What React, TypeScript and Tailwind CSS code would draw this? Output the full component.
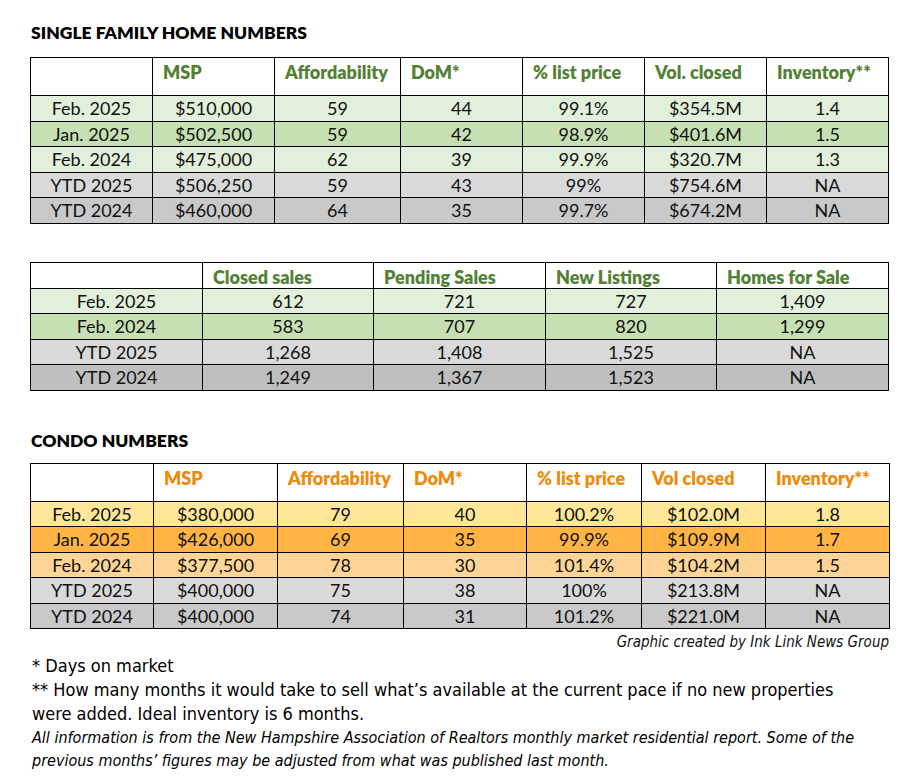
import React from "react";

type Row = { label: string; cells: string[]; bg: string };

const sfHeaders = ["MSP", "Affordability", "DoM*", "% list price", "Vol. closed", "Inventory**"];
const sfRows: Row[] = [
  { label: "Feb. 2025", cells: ["$510,000", "59", "44", "99.1%", "$354.5M", "1.4"], bg: "bg-[#e2efda]" },
  { label: "Jan. 2025", cells: ["$502,500", "59", "42", "98.9%", "$401.6M", "1.5"], bg: "bg-[#c6e0b4]" },
  { label: "Feb. 2024", cells: ["$475,000", "62", "39", "99.9%", "$320.7M", "1.3"], bg: "bg-[#e2efda]" },
  { label: "YTD 2025", cells: ["$506,250", "59", "43", "99%", "$754.6M", "NA"], bg: "bg-[#d9d9d9]" },
  { label: "YTD 2024", cells: ["$460,000", "64", "35", "99.7%", "$674.2M", "NA"], bg: "bg-[#c9c9c9]" },
];

const salesHeaders = ["Closed sales", "Pending Sales", "New Listings", "Homes for Sale"];
const salesRows: Row[] = [
  { label: "Feb. 2025", cells: ["612", "721", "727", "1,409"], bg: "bg-[#e2efda]" },
  { label: "Feb. 2024", cells: ["583", "707", "820", "1,299"], bg: "bg-[#c6e0b4]" },
  { label: "YTD 2025", cells: ["1,268", "1,408", "1,525", "NA"], bg: "bg-[#d9d9d9]" },
  { label: "YTD 2024", cells: ["1,249", "1,367", "1,523", "NA"], bg: "bg-[#bfbfbf]" },
];

const condoHeaders = ["MSP", "Affordability", "DoM*", "% list price", "Vol closed", "Inventory**"];
const condoRows: Row[] = [
  { label: "Feb. 2025", cells: ["$380,000", "79", "40", "100.2%", "$102.0M", "1.8"], bg: "bg-[#ffe699]" },
  { label: "Jan. 2025", cells: ["$426,000", "69", "35", "99.9%", "$109.9M", "1.7"], bg: "bg-[#ffb444]" },
  { label: "Feb. 2024", cells: ["$377,500", "78", "30", "101.4%", "$104.2M", "1.5"], bg: "bg-[#ffd597]" },
  { label: "YTD 2025", cells: ["$400,000", "75", "38", "100%", "$213.8M", "NA"], bg: "bg-[#d9d9d9]" },
  { label: "YTD 2024", cells: ["$400,000", "74", "31", "101.2%", "$221.0M", "NA"], bg: "bg-[#c9c9c9]" },
];

const DataTable = ({
  headers,
  rows,
  widths,
  headColor,
  headHeight,
}: {
  headers: string[];
  rows: Row[];
  widths: number[];
  headColor: string;
  headHeight: string;
}) => (
  <table className="w-[859px] table-fixed border-collapse">
    <colgroup>
      {widths.map((w, i) => (
        <col key={i} style={{ width: w }} />
      ))}
    </colgroup>
    <thead>
      <tr className={headHeight}>
        <th className="border border-black bg-white" />
        {headers.map((h) => (
          <th
            key={h}
            className={`border border-black bg-white pl-[10px] pt-[3px] text-left align-top text-[18px] font-extrabold leading-[22px] ${headColor}`}
          >
            {h}
          </th>
        ))}
      </tr>
    </thead>
    <tbody>
      {rows.map((r) => (
        <tr key={r.label} className={`h-[25.5px] ${r.bg}`}>
          <td className="border border-black text-center text-[18px] leading-[22px]">{r.label}</td>
          {r.cells.map((c, i) => (
            <td key={i} className="border border-black text-center text-[18px] leading-[22px]">
              {c}
            </td>
          ))}
        </tr>
      ))}
    </tbody>
  </table>
);

export default function App() {
  return (
    <div className="min-h-[783px] w-[914px] bg-white pl-[30px] pt-[22px] text-[#111] font-['Lato',sans-serif]">
      <h2 className="pl-[1px] text-[17.5px] font-extrabold leading-[22px] text-black">SINGLE FAMILY HOME NUMBERS</h2>
      <div className="mt-[13px]">
        <DataTable
          headers={sfHeaders}
          rows={sfRows}
          widths={[122, 122, 126, 122, 122, 122, 122]}
          headColor="text-[#538135]"
          headHeight="h-[38px]"
        />
      </div>

      <div className="mt-[38px]">
        <DataTable
          headers={salesHeaders}
          rows={salesRows}
          widths={[172, 171, 172, 171, 172]}
          headColor="text-[#538135]"
          headHeight="h-[26px]"
        />
      </div>

      <h2 className="mt-[39px] pl-[1px] text-[17.5px] font-extrabold leading-[22px] text-black">CONDO NUMBERS</h2>
      <div className="mt-[11px]">
        <DataTable
          headers={condoHeaders}
          rows={condoRows}
          widths={[123, 124, 126, 123, 115, 124, 124]}
          headColor="text-[#ec8b0c]"
          headHeight="h-[38px]"
        />
      </div>

      <p className="w-[859px] pt-[3px] text-right text-[15px] italic leading-[20px] font-['Liberation_Sans_Narrow','DejaVu_Sans_Condensed',sans-serif]">
        Graphic created by Ink Link News Group
      </p>

      <div className="mt-[1px] pl-[2px] font-['Liberation_Sans_Narrow','DejaVu_Sans_Condensed',sans-serif] text-black">
        <p className="text-[18px] leading-[25px]">* Days on market</p>
        <p className="w-[830px] text-[18px] leading-[24px]">
          ** How many months it would take to sell what’s available at the current pace if no new properties were added. Ideal inventory is 6 months.
        </p>
        <p className="w-[860px] text-[16px] italic leading-[23px]">
          All information is from the New Hampshire Association of Realtors monthly market residential report. Some of the previous months’ figures may be adjusted from what was published last month.
        </p>
      </div>
    </div>
  );
}
